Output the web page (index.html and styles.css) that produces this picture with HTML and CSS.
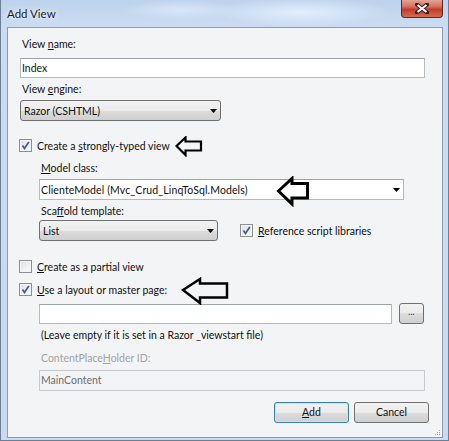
FILE: index.html
```html
<!DOCTYPE html>
<html>
<head>
<meta charset="utf-8">
<link rel="stylesheet" href="styles.css">
</head>
<body>
<div class="window">
  <div class="titlebar">
    <span class="title">Add View</span>
    <div class="close">
      <svg width="14" height="11" viewBox="0 0 14 11"><path d="M2 1.5 L12 9.5 M12 1.5 L2 9.5" stroke="#3a1a16" stroke-width="4" stroke-linecap="square"/><path d="M2.5 2 L11.5 9 M11.5 2 L2.5 9" stroke="#fff" stroke-width="2.2"/></svg>
    </div>
  </div>
  <div class="content">
    <div class="label first">View <u>n</u>ame:</div>
    <div class="textbox tb-name">Index</div>
    <div class="label gap4">View <u>e</u>ngine:</div>
    <div class="select sel-engine"><span>Razor (CSHTML)</span><svg class="caret" width="7" height="4" viewBox="0 0 7 4"><path d="M0 0 H7 L3.5 4 Z" fill="#000"/></svg></div>

    <div class="check row-strong"><span class="cb on"><svg width="11" height="11" viewBox="0 0 11 11"><path d="M2.5 5.5 L4.5 8.5 L8.8 2" fill="none" stroke="#3d5a98" stroke-width="1.7"/></svg></span><span>Create a <u>s</u>trongly-typed view</span></div>

    <div class="indent">
      <div class="label gap8"><u>M</u>odel class:</div>
      <div class="combo sel-model"><span class="combo-text">ClienteModel (Mvc_Crud_LinqToSql.Models)</span><svg class="caret" width="7" height="4" viewBox="0 0 7 4"><path d="M0 0 H7 L3.5 4 Z" fill="#000"/></svg></div>
      <div class="label gap4">Sca<u>f</u>fold template:</div>
      <div class="scaffold-row">
        <div class="select sel-list"><span>List</span><svg class="caret" width="7" height="4" viewBox="0 0 7 4"><path d="M0 0 H7 L3.5 4 Z" fill="#000"/></svg></div>
        <div class="check ref"><span class="cb on"><svg width="11" height="11" viewBox="0 0 11 11"><path d="M2.5 5.5 L4.5 8.5 L8.8 2" fill="none" stroke="#3d5a98" stroke-width="1.7"/></svg></span><span><u>R</u>eference script libraries</span></div>
      </div>
    </div>

    <div class="check row-partial"><span class="cb"></span><span><u>C</u>reate as a partial view</span></div>
    <div class="check row-layout"><span class="cb on"><svg width="11" height="11" viewBox="0 0 11 11"><path d="M2.5 5.5 L4.5 8.5 L8.8 2" fill="none" stroke="#3d5a98" stroke-width="1.7"/></svg></span><span><u>U</u>se a layout or master page:</span></div>

    <div class="indent">
      <div class="layout-row">
        <div class="textbox tb-layout"></div>
        <div class="btn-small">...</div>
      </div>
      <div class="label note">(Leave empty if it is set in a Razor _viewstart file)</div>
      <div class="label disabled gap8">ContentPlace<u>H</u>older ID:</div>
      <div class="textbox tb-disabled">MainContent</div>
    </div>

    <div class="buttons">
      <div class="btn default"><u>A</u>dd</div>
      <div class="btn">Cancel</div>
    </div>

    <svg class="arrow a1" width="28" height="21" viewBox="0 0 28 21"><path d="M1.5 10 L10.5 1.5 L10.5 5.5 L26 5.5 L26 14.5 L10.5 14.5 L10.5 19 Z" fill="none" stroke="#000" stroke-width="2.2" stroke-linejoin="miter"/></svg>
    <svg class="arrow a2" width="34" height="31" viewBox="0 0 34 31"><path d="M2.5 15 L16 2.5 L16 7.5 L31.5 7.5 L31.5 22 L16 22 L16 28 Z" fill="none" stroke="#000" stroke-width="3"/></svg>
    <svg class="arrow a3" width="49" height="28" viewBox="0 0 49 28"><path d="M2 13 L19 2 L19 6.5 L46 6.5 L46 20.5 L19 20.5 L19 26 Z" fill="none" stroke="#000" stroke-width="2.5"/></svg>
    <svg class="grip" width="6" height="6" viewBox="0 0 6 6"><rect x="4" y="0" width="1" height="1" fill="#9aa"/><rect x="2" y="2" width="1" height="1" fill="#9aa"/><rect x="4" y="2" width="1" height="1" fill="#9aa"/><rect x="0" y="4" width="1" height="1" fill="#9aa"/><rect x="2" y="4" width="1" height="1" fill="#9aa"/><rect x="4" y="4" width="1" height="1" fill="#9aa"/></svg>
  </div>
</div>
</body>
</html>
```
FILE: styles.css
```css
* { box-sizing: border-box; }
html, body { margin: 0; padding: 0; }
body {
  width: 449px;
  height: 441px;
  overflow: hidden;
  background: #c9dbf1;
  font-family: Lato, "Noto Sans", sans-serif;
  font-size: 10.5px;
  color: #111;
}
u { text-decoration: underline; text-underline-offset: 1px; }

.window {
  width: 449px;
  height: 441px;
  display: flex;
  flex-direction: column;
  background: linear-gradient(to bottom, #bdd2ec 0px, #cbdcf2 26px, #c9dbf1 100%);
  border-left: 1px solid #6d7f97;
  border-right: 1px solid #6d7f97;
  border-bottom: 1px solid #6d7f97;
}

.titlebar {
  height: 27px;
  flex: none;
  display: flex;
  align-items: flex-start;
  background:
    radial-gradient(ellipse 90px 14px at 300px 12px, rgba(235,244,255,0.8), rgba(235,244,255,0) 100%),
    radial-gradient(ellipse 60px 10px at 180px 10px, rgba(225,238,252,0.7), rgba(225,238,252,0) 100%);
}
.title {
  padding-left: 6px;
  line-height: 27px;
  font-size: 11.5px;
  color: #1a1a1a;
  text-shadow: 0 0 6px #eef5fd, 0 0 3px #eef5fd;
}
.close {
  margin-left: auto;
  margin-right: 5px;
  width: 42px;
  height: 18px;
  border: 1px solid #5b2a24;
  border-top: none;
  border-radius: 0 0 4px 4px;
  background: linear-gradient(to bottom, #e2a596 0%, #d56e5e 40%, #c23b2b 55%, #d46a52 100%);
  display: flex;
  align-items: center;
  justify-content: center;
}

.content {
  position: relative;
  flex: 1;
  margin: 0 5px 2px 6px;
  border: 1px solid #8d9db1;
  background: #f3f4f6;
  padding: 0 13px 0 12px;
}

.label {
  height: 15px;
  line-height: 15px;
  padding-left: 2px;
  white-space: nowrap;
}
.label.first { margin-top: 9px; }
.gap4 { margin-top: 4px; }
.gap8 { margin-top: 8px; }
.label.disabled { color: #a3a3a3; }
.label.note { margin-top: 4px; }

.textbox {
  height: 20px;
  border: 1px solid #b5b9c1;
  border-top-color: #9da2ab;
  background: #fff;
  padding-left: 1px;
  line-height: 18px;
  white-space: nowrap;
}
.tb-name { width: 405px; margin-top: 6px; }
.tb-layout { width: 353px; }
.tb-disabled {
  width: 386px;
  height: 21px;
  line-height: 19px;
  margin-top: 4px;
  background: #f3f4f6;
  border-color: #c7c9cc;
  color: #6d6d6d;
}

.select {
  height: 21px;
  border: 1px solid #707070;
  border-radius: 3px;
  background: linear-gradient(to bottom, #f2f2f2 0%, #ebebeb 50%, #dddddd 50%, #cfcfcf 100%);
  display: flex;
  align-items: center;
  padding: 0 3px 0 3px;
  white-space: nowrap;
}
.select span, .combo span { flex: 1; }
.combo-text { letter-spacing: 0.12px; }
.caret { flex: none; margin-right: 0px; }
.sel-engine { width: 201px; margin-top: 3px; }
.sel-list { width: 179px; }

.combo {
  height: 21px;
  width: 365px;
  margin-top: 3px;
  border: 1px solid #b5b9c1;
  border-top-color: #9da2ab;
  background: #fff;
  display: flex;
  align-items: center;
  padding: 0 3px 0 1px;
  white-space: nowrap;
}

.check {
  display: flex;
  align-items: center;
  height: 15px;
  gap: 5px;
  white-space: nowrap;
}
.row-strong { margin-top: 17px; margin-left: -1px; }
.row-partial { margin-top: 18px; margin-left: -1px; }
.row-layout { margin-top: 8px; margin-left: -1px; }

.cb {
  width: 13px;
  height: 13px;
  flex: none;
  border: 1px solid #8e8f8f;
  background: linear-gradient(135deg, #dcdee2 0%, #f0f1f3 60%, #fbfbfb 100%);
  box-shadow: inset 0 0 0 1px #f4f4f4;
  display: flex;
  align-items: center;
  justify-content: center;
}

.indent { margin-left: 19px; }

.scaffold-row {
  display: flex;
  align-items: center;
  margin-top: 1px;
  gap: 22px;
}

.layout-row {
  display: flex;
  align-items: center;
  gap: 7px;
  margin-top: 6px;
  height: 21px;
}
.btn-small {
  width: 25px;
  height: 21px;
  border: 1px solid #707070;
  border-radius: 3px;
  background: linear-gradient(to bottom, #f2f2f2 0%, #ebebeb 50%, #dddddd 50%, #cfcfcf 100%);
  text-align: center;
  line-height: 16px;
  font-size: 9px;
  color: #333;
}

.buttons {
  display: flex;
  justify-content: flex-end;
  gap: 5px;
  margin-top: 11px;
}
.btn {
  width: 75px;
  height: 21px;
  border: 1px solid #707070;
  border-radius: 3px;
  background: linear-gradient(to bottom, #f2f2f2 0%, #ebebeb 50%, #dddddd 50%, #cfcfcf 100%);
  text-align: center;
  line-height: 19px;
}
.btn.default {
  border-color: #3c7fb1;
  box-shadow: inset 0 0 0 1px #bfe6fa;
}

.arrow { position: absolute; }
.a1 { left: 167px; top: 108px; }
.a2 { left: 268px; top: 148px; }
.a3 { left: 173px; top: 249px; }
.grip { position: absolute; right: 1px; bottom: 1px; }
```
